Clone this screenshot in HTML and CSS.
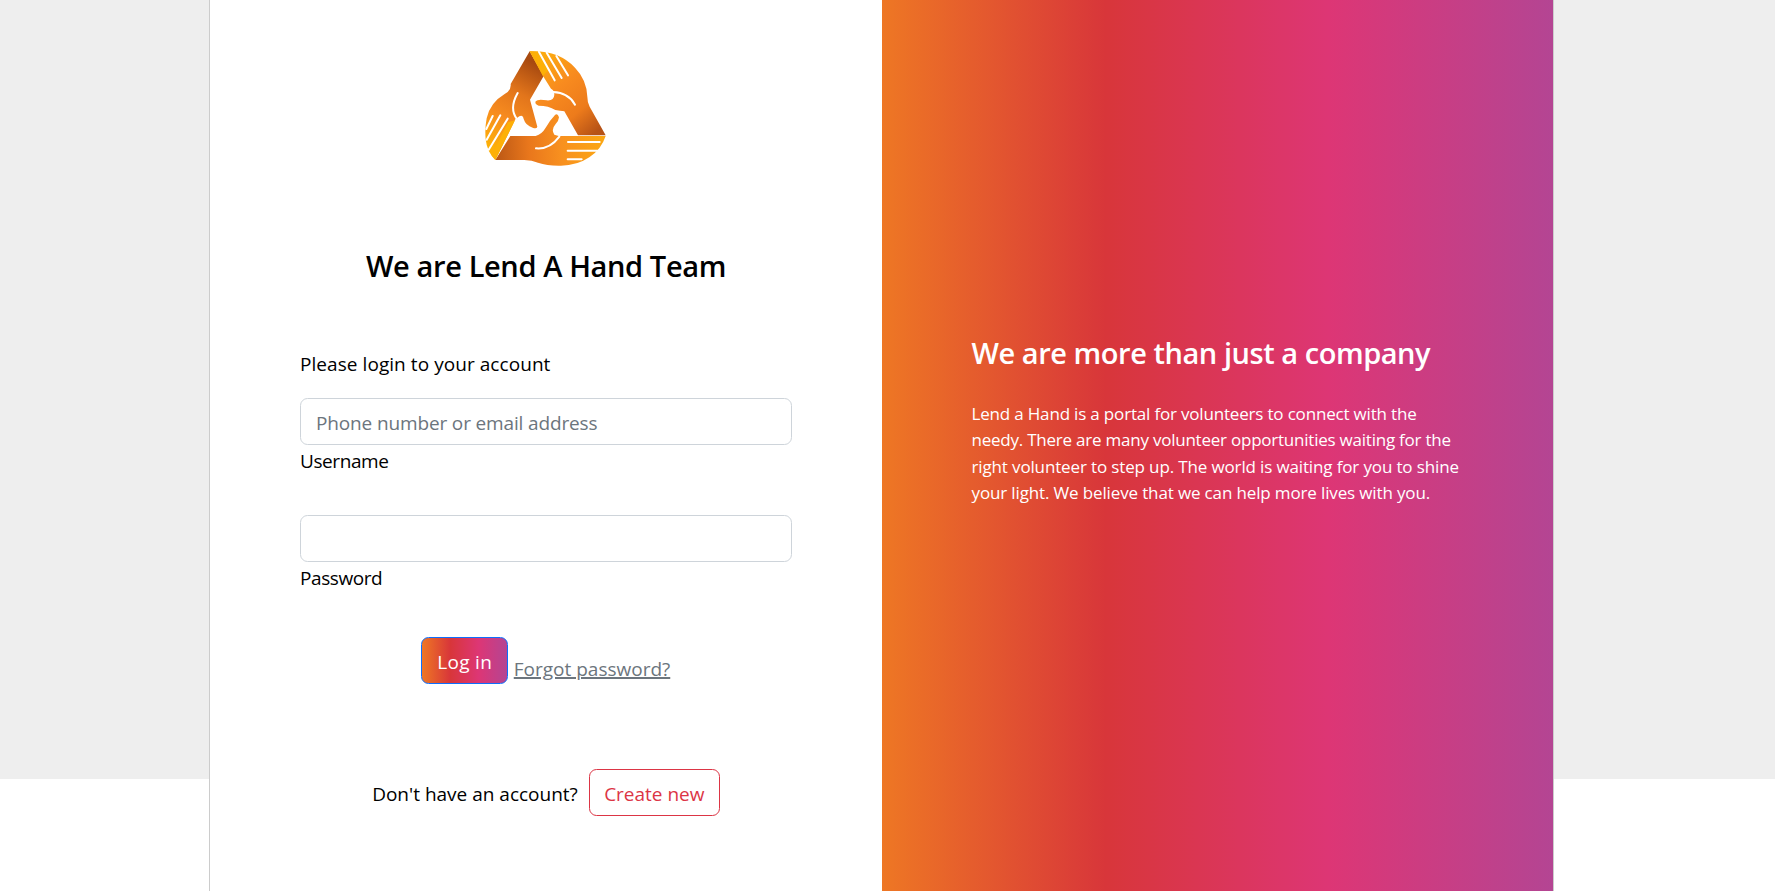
FILE: index.html
```html
<!DOCTYPE html>
<html lang="en">
<head>
<meta charset="utf-8">
<title>Lend A Hand</title>
<link rel="stylesheet" href="styles.css">
</head>
<body>
<section class="page">
<main class="card">
<div class="login">
<svg class="logo" viewBox="2 0 420 405" role="img" aria-label="Lend A Hand">
<defs>
<linearGradient id="ga" gradientUnits="userSpaceOnUse" x1="185" y1="70" x2="365" y2="275"><stop offset="0" stop-color="#fca90f"/><stop offset=".35" stop-color="#f88b1f"/><stop offset=".7" stop-color="#ed7b1b"/><stop offset="1" stop-color="#b65216"/></linearGradient>
<linearGradient id="gb" gradientUnits="userSpaceOnUse" x1="185" y1="75" x2="45" y2="320"><stop offset="0" stop-color="#a84a10"/><stop offset=".35" stop-color="#e2751b"/><stop offset=".65" stop-color="#f78b1f"/><stop offset="1" stop-color="#fdb007"/></linearGradient>
<linearGradient id="gc" gradientUnits="userSpaceOnUse" x1="65" y1="340" x2="385" y2="320"><stop offset="0" stop-color="#bd5915"/><stop offset=".3" stop-color="#e9771c"/><stop offset=".6" stop-color="#f8901f"/><stop offset="1" stop-color="#fba713"/></linearGradient>
</defs>
<path fill="url(#gb)" d="M163 34L205 108L164 179L186 260Q184 268 172 263Q151 257 145 237Q142 223 132 229L120 238L60 360Q35 336 31 298Q28 265 34 235Q44 188 88 162Q108 151 106 132Z"/>
<path fill="url(#ga)" d="M163 34Q250 30 299 83Q334 119 336 170Q336 187 343 200L391 286H308L267 214Q255 212 240 210Q220 197 190 197Q177 193 181 184Q187 176 214 181Q236 183 237 164Q237 151 227 146L203 108Z"/>
<path fill="#fdb007" d="M163 34L187 35L219 91L203 108Z"/>
<path fill="url(#gc)" d="M60 360L105 288H181Q200 282 211 263Q223 242 239 225Q247 219 251 232Q250 244 241 252Q226 269 237 284L250 288H391Q378 328 342 352Q305 377 257 377Q217 378 188 368Q170 360 147 360Z"/>
<path fill="#fdb007" d="M60 360L49 346L98 247L119 241Z"/>
<g class="logo-lines">
<path d="M191 36L238 121M214 38L259 114M243 48L278 106"/>
<path d="M52 228L33 267M75 226L34 299M97 236L40 329"/>
<path d="M278 306H373M277 332H366M277 358H319"/>
<path d="M233 156Q280 158 299 194M127 159Q101 205 124 236M182 325Q223 329 252 290"/>
</g>
</svg>
<h1 class="title">We are Lend A Hand Team</h1>
<form class="form">
<p class="intro">Please login to your account</p>
<input class="field" type="email" placeholder="Phone number or email address" aria-label="Username">
<div class="label">Username</div>
<input class="field second" type="password" aria-label="Password">
<div class="label">Password</div>
<div class="actions">
<button class="button primary" type="button">Log in</button>
<a class="forgot" href="#">Forgot password?</a>
</div>
<div class="signup">
<span class="question">Don't have an account?</span>
<button class="button outline" type="button">Create new</button>
</div>
</form>
</div>
<aside class="about">
<h2 class="about-title">We are more than just a company</h2>
<p class="about-text"><span class="tight">Lend a Hand is a portal for volunteers to connect with the</span><br><span class="tighter">needy. There are many volunteer opportunities waiting for the</span><br>right volunteer to step up. The world is waiting for you to shine<br>your light. We believe that we can help more lives with you.</p>
</aside>
</main>
</section>
</body>
</html>
```
FILE: styles.css
```css
* { box-sizing: border-box; }
body {
  margin: 0;
  background: #fff;
  color: #000;
  font: 19px/30px "Open Sans", "Noto Sans", sans-serif;
}
h1, h2, p { margin: 0; }
.page {
  height: 891px;
  overflow: hidden;
  background: linear-gradient(#eee 779px, #fff 779px);
}
.card {
  display: grid;
  grid-template-columns: 672px 671px;
  width: 1345px;
  height: 891px;
  margin-left: 209px;
  background: #fff;
  border-left: 1px solid #ccc;
  border-right: 1px solid #ccc;
}
.login {
  display: flex;
  flex-direction: column;
  padding: 40px 90px 0;
}
.logo {
  display: block;
  width: 140px;
  height: 135px;
  align-self: center;
}
.logo-lines {
  fill: none;
  stroke: #fff;
  stroke-width: 6;
  stroke-linecap: round;
}
.title {
  margin-top: 73px;
  text-align: center;
  font-size: 29px;
  line-height: 36px;
  font-weight: 600;
  letter-spacing: -0.38px;
  white-space: nowrap;
}
.form { margin-top: 65px; }
.intro { letter-spacing: 0.06px; }
.field {
  display: block;
  width: 492px;
  height: 47px;
  margin-top: 19px;
  padding: 3px 15px 0;
  border: 1px solid #ced4da;
  border-radius: 7.5px;
  background: #fff;
  font: inherit;
  letter-spacing: -0.14px;
}
.field::placeholder { color: #6c757d; opacity: 1; }
.label { margin-top: 1px; letter-spacing: -0.42px; }
.second { margin-top: 39px; }
.actions {
  display: flex;
  justify-content: center;
  gap: 6px;
  margin: 44px 1px 0 0;
}
.button {
  height: 47px;
  padding: 3px 0 0;
  border: 1px solid;
  border-radius: 7.5px;
  font: inherit;
  white-space: nowrap;
}
.primary {
  width: 87px;
  padding-left: 1px;
  color: #fff;
  border-color: #0d6efd;
  background: linear-gradient(to right, #ee7724, #d8363a, #dd3675, #b44593);
  letter-spacing: 0.3px;
}
.forgot {
  margin-top: 17px;
  color: #6c757d;
  text-decoration-thickness: 2px;
  white-space: nowrap;
}
.signup {
  display: flex;
  justify-content: center;
  gap: 11px;
  margin-top: 85px;
}
.question { padding-top: 10px; white-space: nowrap; }
.outline {
  width: 131px;
  color: #dc3545;
  border-color: #dc3545;
  background: #fff;
}
.about {
  padding: 335px 0 0 89.5px;
  color: #fff;
  background: linear-gradient(to right, #ee7724, #d8363a, #dd3675, #b44593);
  white-space: nowrap;
}
.about-title {
  font-size: 29px;
  line-height: 36px;
  font-weight: 600;
  letter-spacing: -0.45px;
}
.about-text {
  margin-top: 30px;
  font-size: 17px;
  line-height: 26.4px;
  letter-spacing: -0.14px;
}
.tight { letter-spacing: -0.18px; }
.tighter { letter-spacing: -0.23px; }
```
